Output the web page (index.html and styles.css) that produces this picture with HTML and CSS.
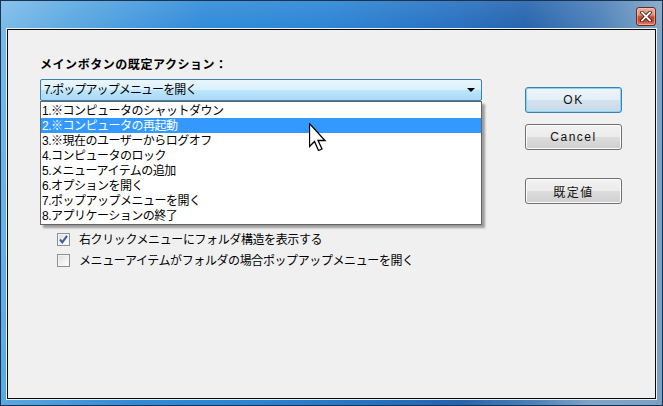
FILE: index.html
```html
<!DOCTYPE html>
<html lang="ja">
<head>
<meta charset="utf-8">
<title>設定</title>
<link rel="stylesheet" href="styles.css">
</head>
<body>
<div class="window">
  <div class="titlebar">
    <div class="close">
      <svg width="12" height="11" viewBox="0 0 12 11">
        <path d="M2 1.5 L10 9.5 M10 1.5 L2 9.5" stroke="#4a1a10" stroke-width="3.6" stroke-linecap="square"/>
        <path d="M2 1.5 L10 9.5 M10 1.5 L2 9.5" stroke="#ffffff" stroke-width="1.8" stroke-linecap="square"/>
      </svg>
    </div>
  </div>
  <div class="frame-inner">
    <div class="content">
      <div class="main">
        <div class="group-label">メインボタンの既定アクション：</div>
        <div class="combo-wrap">
          <div class="combo">
            <span class="combo-text">7.ポップアップメニューを開く</span>
            <span class="arrow"></span>
          </div>
          <ul class="dropdown">
            <li>1.※コンピュータのシャットダウン</li>
            <li class="selected">2.※コンピュータの再起動</li>
            <li>3.※現在のユーザーからログオフ</li>
            <li>4.コンピュータのロック</li>
            <li>5.メニューアイテムの追加</li>
            <li>6.オプションを開く</li>
            <li>7.ポップアップメニューを開く</li>
            <li>8.アプリケーションの終了</li>
          </ul>
        </div>
        <div class="checks">
          <div class="check">
            <span class="box">
              <svg width="11" height="11" viewBox="0 0 11 11">
                <path d="M2 5.5 L4.3 8.3 L9 1.8" fill="none" stroke="#3d5a9e" stroke-width="2"/>
              </svg>
            </span>
            <span class="check-text">右クリックメニューにフォルダ構造を表示する</span>
          </div>
          <div class="check">
            <span class="box"></span>
            <span class="check-text">メニューアイテムがフォルダの場合ポップアップメニューを開く</span>
          </div>
        </div>
      </div>
      <div class="buttons">
        <div class="btn default">OK</div>
        <div class="btn">Cancel</div>
        <div class="btn reset">既定値</div>
      </div>
    </div>
  </div>
  <svg class="cursor" width="18" height="29" viewBox="0 0 18 29">
    <path d="M0.5 0.5 L0.5 23.5 L5.5 18.5 L9.5 27.5 L13 26 L9 17.5 L16 17.5 Z" fill="#ffffff" stroke="#000000" stroke-width="1.3" stroke-linejoin="miter"/>
  </svg>
</div>
</body>
</html>
```

FILE: styles.css
```css
html, body {
  margin: 0;
  padding: 0;
  overflow: hidden;
}

body {
  width: 663px;
  height: 406px;
  font-family: "Noto Sans CJK JP", "Noto Sans", sans-serif;
  font-size: 12px;
  color: #000;
}

.window {
  position: relative;
  width: 663px;
  height: 406px;
  box-sizing: border-box;
  border: 1px solid #1c3350;
  padding: 0 5px 5px 5px;
  display: flex;
  flex-direction: column;
  background:
    linear-gradient(to bottom, rgba(255,255,255,0.10) 0%, rgba(255,255,255,0) 8%),
    linear-gradient(100deg, #7cbbe9 0%, #5aa8e2 10%, #2f8ad8 28%, #2a84d4 45%, #2570c0 62%, #2463ad 72%, #4a7fb8 82%, #7ea4c7 90%, #7aa0c3 100%);
}

.titlebar {
  height: 27px;
  box-sizing: border-box;
  padding-top: 6px;
  padding-right: 1px;
  display: flex;
  justify-content: flex-end;
  align-items: flex-start;
}

.close {
  width: 20px;
  height: 19px;
  box-sizing: border-box;
  border: 1px solid #6a2a1c;
  border-radius: 3px;
  background: linear-gradient(to bottom, #ebb0a0 0%, #e0927c 40%, #c94a2e 52%, #c3492f 75%, #e2876c 100%);
  box-shadow: inset 0 0 0 1px rgba(255,220,210,0.45);
  display: flex;
  align-items: center;
  justify-content: center;
}

.frame-inner {
  flex: 1;
  display: flex;
  border: 1px solid #e8f1fa;
}

.content {
  flex: 1;
  display: flex;
  border: 1px solid #0a0a0a;
  background: #f0f0f0;
  padding: 26px 32px 0 32px;
}

.main {
  width: 442px;
}

.group-label {
  height: 16px;
  line-height: 16px;
  font-weight: bold;
  letter-spacing: 0.55px;
  margin-bottom: 7px;
}

.combo-wrap {
  position: relative;
}

.combo {
  height: 22px;
  box-sizing: border-box;
  border: 1px solid #3c7fb1;
  border-radius: 2px;
  background: linear-gradient(to bottom, #eaf6fd 0%, #d9f0fc 48%, #bee6fd 50%, #a7d9f5 100%);
  display: flex;
  align-items: center;
  justify-content: space-between;
  padding: 0 6px 0 3px;
}

.combo-text {
  font-family: "Liberation Sans", "Noto Sans CJK JP", sans-serif;
  line-height: 18px;
  letter-spacing: -0.9px;
}

.arrow {
  width: 0;
  height: 0;
  border-left: 4px solid transparent;
  border-right: 4px solid transparent;
  border-top: 4px solid #000;
}

.dropdown {
  position: absolute;
  top: 22px;
  left: 0;
  right: 0;
  margin: 0;
  padding: 1px 0;
  list-style: none;
  background: #fff;
  border: 1px solid #646464;
  box-shadow: 3px 3px 2px rgba(0,0,0,0.35);
}

.dropdown li {
  font-family: "Liberation Sans", "Noto Sans CJK JP", sans-serif;
  height: 15px;
  line-height: 17px;
  padding-left: 1px;
  letter-spacing: -0.5px;
  white-space: nowrap;
}

.dropdown li.selected {
  background: #3399ff;
  color: #fff;
}

.checks {
  margin-top: 130px;
  padding-left: 17px;
  display: flex;
  flex-direction: column;
  gap: 5px;
}

.check {
  height: 16px;
  display: flex;
  align-items: center;
}

.box {
  width: 13px;
  height: 13px;
  box-sizing: border-box;
  border: 1px solid #8e8f8f;
  background: linear-gradient(135deg, #dcdcdc 0%, #f2f2f2 60%, #ffffff 100%);
  box-shadow: inset 0 0 0 1px #f4f4f4;
  margin-right: 9px;
  display: flex;
  align-items: center;
  justify-content: center;
}

.check-text {
  line-height: 16px;
  letter-spacing: -0.4px;
  white-space: nowrap;
}

.buttons {
  width: 97px;
  margin-left: 43px;
  padding-top: 31px;
  display: flex;
  flex-direction: column;
}

.btn {
  height: 26px;
  box-sizing: border-box;
  border: 1px solid #707070;
  border-radius: 3px;
  background: linear-gradient(to bottom, #f2f2f2 0%, #ebebeb 50%, #dddddd 51%, #cfcfcf 100%);
  box-shadow: inset 0 0 0 1px #fcfcfc;
  display: flex;
  align-items: center;
  justify-content: center;
  font-family: "Liberation Sans", "Noto Sans CJK JP", sans-serif;
  font-size: 12px;
  font-weight: normal;
  letter-spacing: 1.5px;
  color: #111;
  margin-bottom: 11px;
}

.btn.default {
  border-color: #3c7fb1;
  box-shadow: inset 0 0 0 1px #88d4f5;
  background: linear-gradient(to bottom, #eef5fa 0%, #e3eef6 50%, #d3e2ee 51%, #c6d9e8 100%);
}

.btn.reset {
  margin-top: 17px;
  font-family: "Noto Sans CJK JP", sans-serif;
  letter-spacing: 1.5px;
}

.cursor {
  position: absolute;
  left: 308px;
  top: 122px;
}
```
